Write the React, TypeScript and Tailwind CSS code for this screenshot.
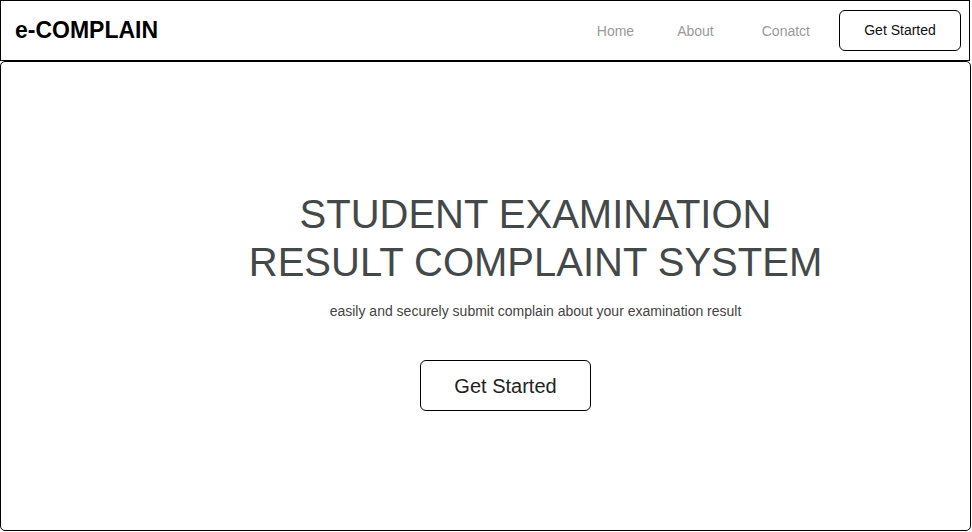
export default function App() {
  const links = ["Home", "About", "Conatct"];
  return (
    <div
      className="h-[532px] w-[972px] bg-white text-black"
      style={{ fontFamily: '"Liberation Sans", Arial, sans-serif' }}
    >
      <header className="flex h-[61px] w-[970px] items-center justify-between border border-black pl-[14px] pr-[8px]">
        <h1 className="text-[23px] font-bold">e-COMPLAIN</h1>
        <nav className="flex items-center">
          <ul className="mr-[29px] flex items-center gap-[43px] pt-[2px] text-[14px] text-[#999]">
            {links.map((l) => (
              <li key={l} className={l === "Conatct" ? "ml-[5px]" : ""}>
                {l}
              </li>
            ))}
          </ul>
          <button className="h-[41px] w-[122px] rounded-[6px] border border-black text-[14px] text-[#111]">
            Get Started
          </button>
        </nav>
      </header>

      <main className="flex h-[470px] w-[971px] flex-col items-center rounded-[5px] border border-black pl-[100px] pt-[128px]">
        <h2 className="text-center text-[40px] leading-[48px] text-[#434949]">
          STUDENT EXAMINATION
          <br />
          RESULT COMPLAINT SYSTEM
        </h2>
        <p className="mt-[15px] text-[14px] text-[#444]">
          easily and securely submit complain about your examination result
        </p>
        <button className="mr-[60px] mt-[38px] h-[51px] w-[171px] rounded-[6px] border border-black text-[20px] text-[#222]">
          Get Started
        </button>
      </main>
    </div>
  );
}
